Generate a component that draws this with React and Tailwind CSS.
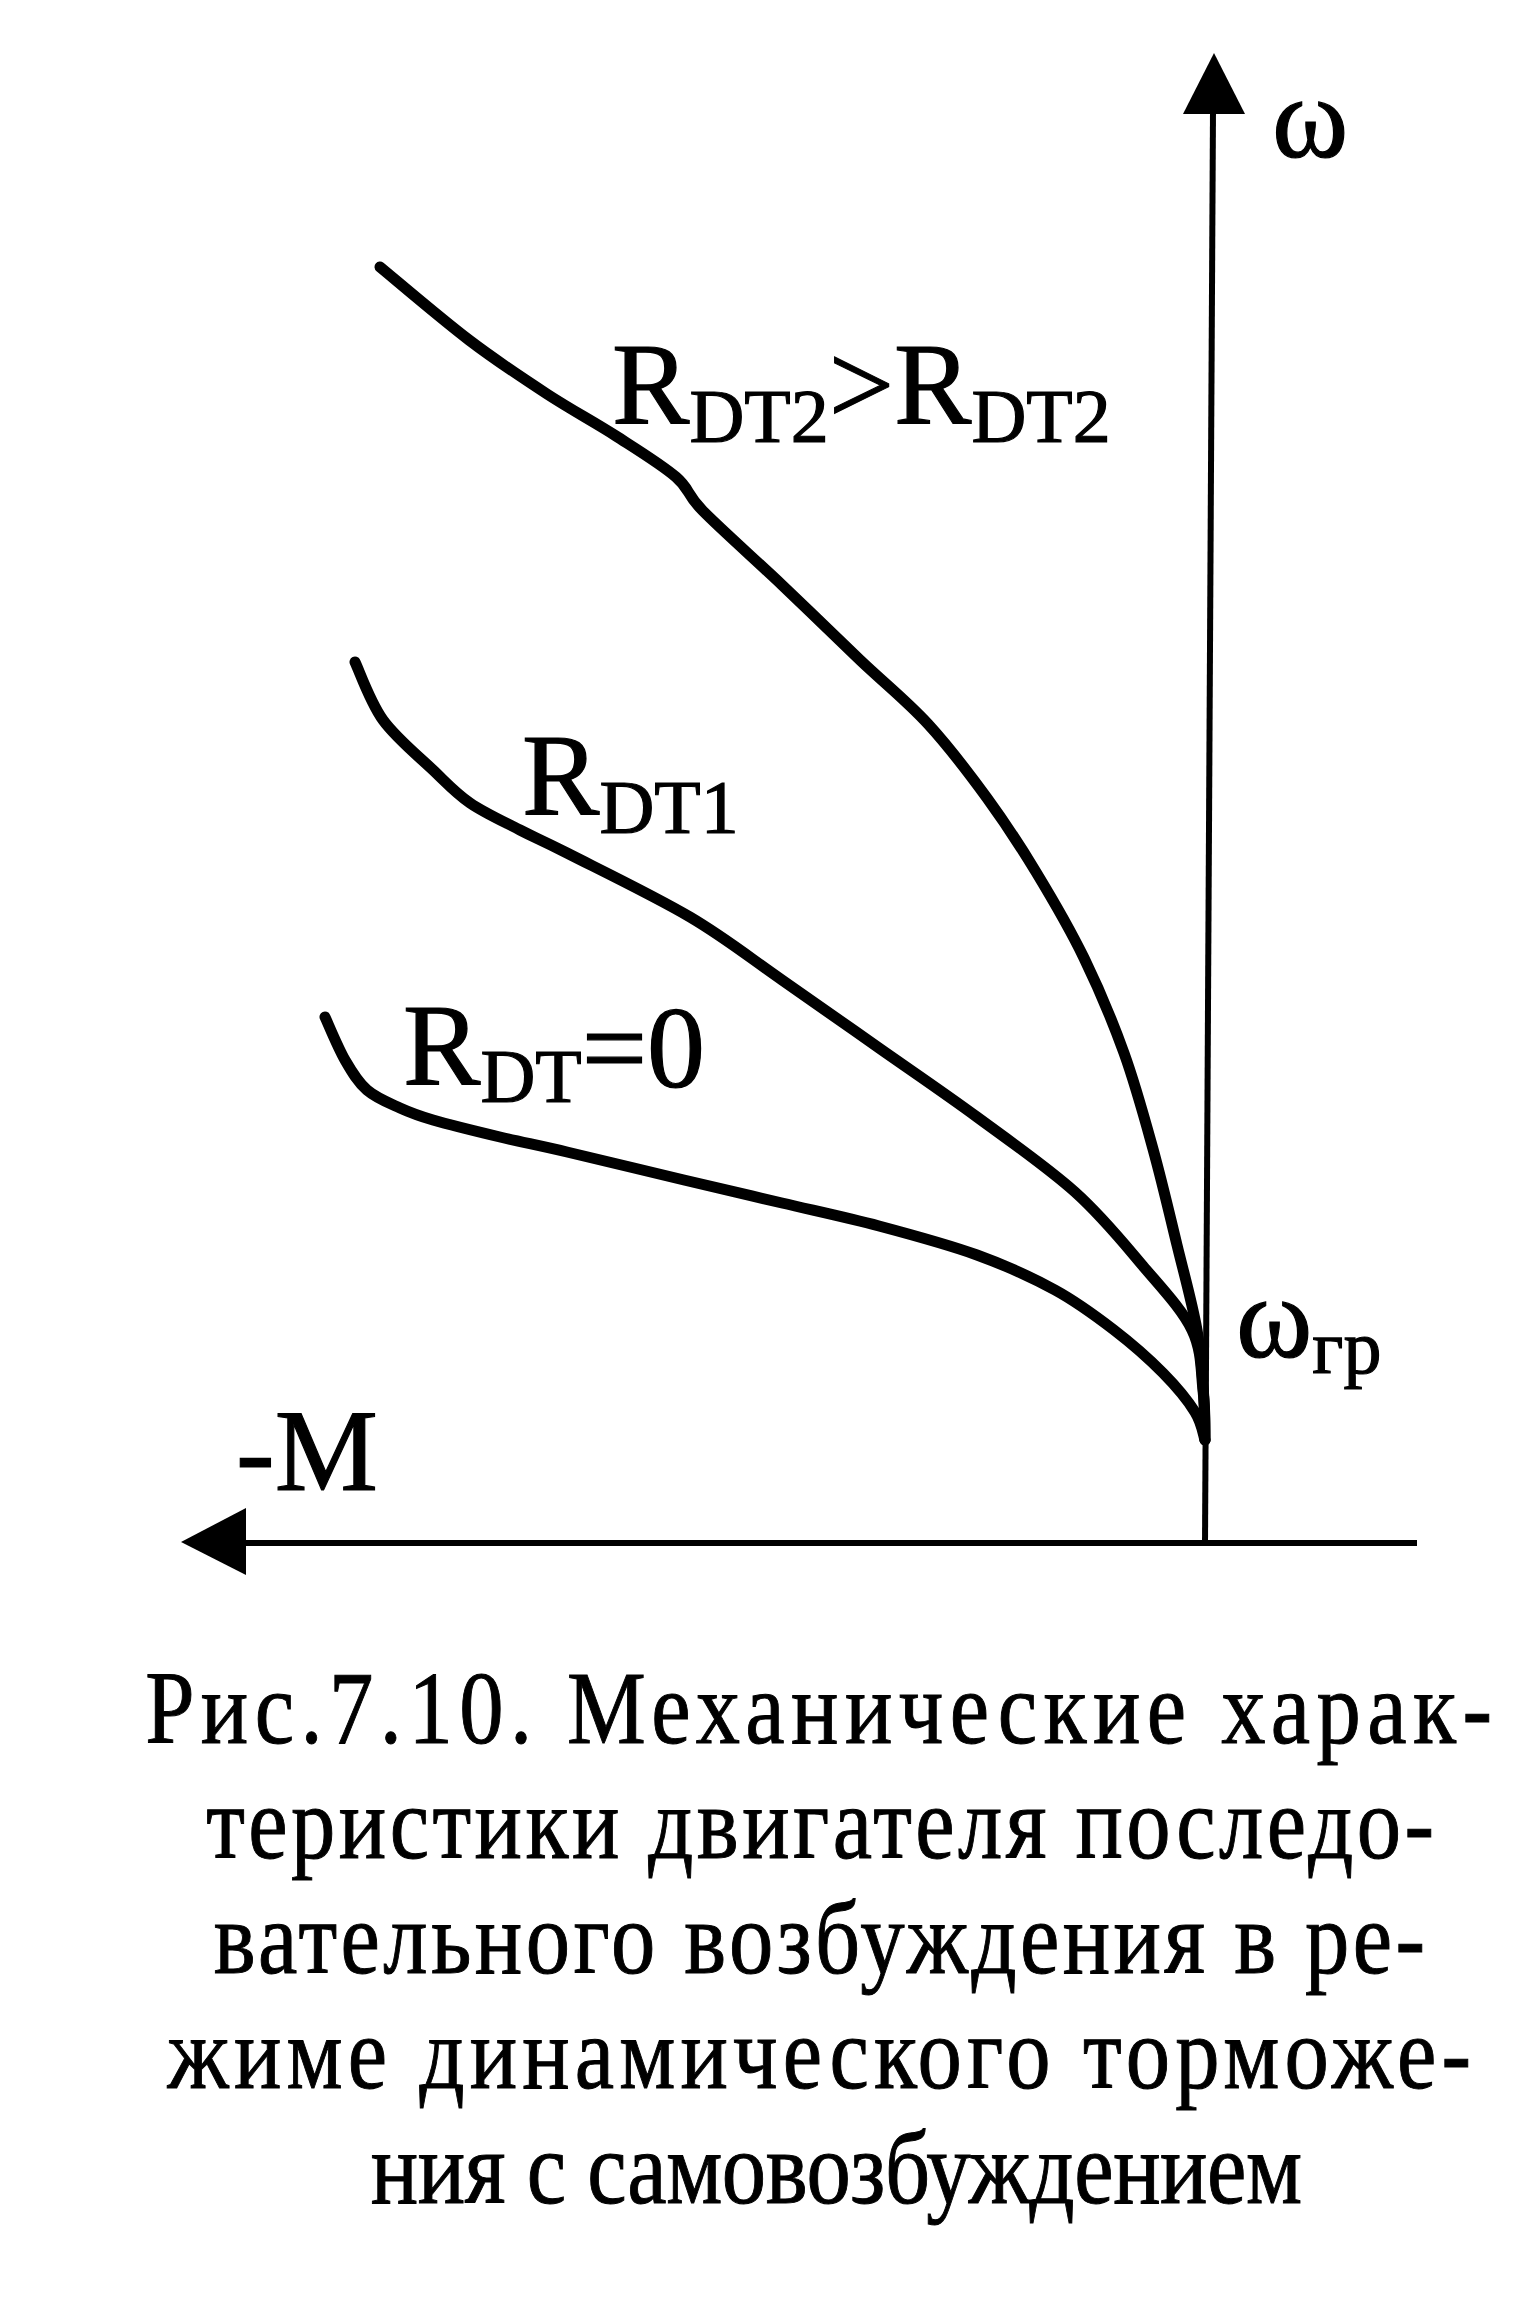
import React from 'react';

// sampled from the scan, page pixels
const CURVES = [
  [
    [380, 267], [469, 340], [547, 394], [616, 436], [676, 477], [703, 511],
    [782, 585], [860, 660], [928, 724], [987, 798], [1036, 872], [1084, 958],
    [1124, 1053], [1153, 1149], [1177, 1245], [1197, 1330], [1204, 1400], [1205, 1440],
  ],
  [
    [355, 662], [383, 720], [433, 770], [470, 803], [520, 830], [567, 853],
    [690, 917], [782, 980], [879, 1048], [977, 1117], [1075, 1192], [1143, 1266],
    [1192, 1330], [1203, 1390], [1205, 1440],
  ],
  [
    [325, 1017], [345, 1060], [367, 1090], [400, 1108], [433, 1120], [500, 1137],
    [567, 1152], [684, 1180], [782, 1203], [879, 1226], [977, 1255], [1055, 1290],
    [1114, 1330], [1163, 1373], [1195, 1412], [1205, 1440],
  ],
];

// catmull-rom -> cubic bezier
const smoothPath = (pts) => {
  let d = `M${pts[0][0]},${pts[0][1]}`;
  for (let i = 0; i < pts.length - 1; i++) {
    const p0 = pts[i - 1] || pts[i];
    const p1 = pts[i];
    const p2 = pts[i + 1];
    const p3 = pts[i + 2] || p2;
    const c1 = [p1[0] + (p2[0] - p0[0]) / 6, p1[1] + (p2[1] - p0[1]) / 6];
    const c2 = [p2[0] - (p3[0] - p1[0]) / 6, p2[1] - (p3[1] - p1[1]) / 6];
    d += ` C${c1[0]},${c1[1]} ${c2[0]},${c2[1]} ${p2[0]},${p2[1]}`;
  }
  return d;
};

const BIG = 116;
const SUB = 76;

const Chart = () => (
  <svg
    width="1515"
    height="1620"
    viewBox="0 0 1515 1620"
    className="block"
    style={{ fontFamily: '"Liberation Serif", "Times New Roman", serif' }}
  >
    {/* axes */}
    <line x1="1213" y1="110" x2="1205" y2="1545" stroke="#000" strokeWidth="6" />
    <polygon points="1214,53 1183,114 1245,114" fill="#000" />
    <line x1="240" y1="1543" x2="1417" y2="1543" stroke="#000" strokeWidth="6" />
    <polygon points="181,1542 246,1508 246,1575" fill="#000" />

    {CURVES.map((c, i) => (
      <path
        key={i}
        d={smoothPath(c)}
        fill="none"
        stroke="#000"
        strokeWidth="11"
        strokeLinecap="round"
        strokeLinejoin="round"
      />
    ))}

    {/* printed ink is a bit heavier than the plain face */}
    <g stroke="#000" strokeWidth="1.2">
      <text x="1272" y="157" fontSize={BIG}>ω</text>
      <text x="236" y="1490" fontSize={BIG}>-M</text>
      <text x="1236" y="1357" fontSize={BIG}>
        ω<tspan fontSize={SUB} dy="16">гр</tspan>
      </text>

      <text x="612" y="424" fontSize={BIG}>
        R<tspan fontSize={SUB} dy="18">DT2</tspan>
        <tspan fontSize={BIG} dy="-18">&gt;R</tspan>
        <tspan fontSize={SUB} dy="18">DT2</tspan>
      </text>
      <text x="522" y="815" fontSize={BIG}>
        R<tspan fontSize={SUB} dy="18">DT1</tspan>
      </text>
      <text x="403" y="1085" fontSize={BIG}>
        R<tspan fontSize={SUB} dy="17">DT</tspan>
        <tspan fontSize={BIG} dy="-15">=0</tspan>
      </text>
    </g>
  </svg>
);

// the scan uses a narrow Times; lines 1-4 are spaced out to the measure
const CAPTION = [
  { text: 'Рис.7.10. Механические харак-', cls: 'tracking-[7.5px]' },
  { text: 'теристики двигателя последо-', cls: 'tracking-[4px]' },
  { text: 'вательного возбуждения в ре-', cls: 'tracking-[4px]' },
  { text: 'жиме динамического торможе-', cls: 'tracking-[6px]' },
  { text: 'ния с самовозбуждением', cls: 'tracking-[-0.5px] ml-[30px]' },
];

export default function App() {
  return (
    <div className="w-[1515px] min-h-[2297px] bg-white text-black">
      <Chart />
      <div className="flex flex-col items-center pl-[128px] pt-[31px] font-['Liberation_Serif',serif] text-[103px] leading-[115px] [-webkit-text-stroke:1px_#000]">
        {CAPTION.map((line) => (
          <div key={line.text} className={`whitespace-nowrap scale-x-[0.86] ${line.cls}`}>
            {line.text}
          </div>
        ))}
      </div>
    </div>
  );
}
